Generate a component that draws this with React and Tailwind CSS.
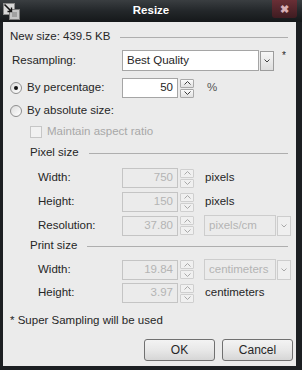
import React from 'react';

const font = { fontFamily: '"Liberation Sans", Arial, sans-serif' };

const Spin = ({ disabled }) => (
  <div className="flex flex-col w-[14px] h-[19px] ml-[2px] gap-px">
    {['up', 'down'].map((d) => (
      <div
        key={d}
        className={`flex-1 flex items-center justify-center border rounded-[1px] ${
          disabled ? 'border-[#cfcfcf] bg-[#f0f0f0]' : 'border-[#a9a9a9] bg-gradient-to-b from-[#fbfbfb] to-[#e1e1e1]'
        }`}
      >
        <svg width="7" height="4" viewBox="0 0 7 4">
          <path
            d={d === 'up' ? 'M0.5 3.5L3.5 0.5L6.5 3.5' : 'M0.5 0.5L3.5 3.5L6.5 0.5'}
            stroke={disabled ? '#a8a8a8' : '#3c3c3c'}
            fill="none"
          />
        </svg>
      </div>
    ))}
  </div>
);

const NumField = ({ value, disabled }) => (
  <div className="flex items-center">
    <div
      className={`w-[56px] h-[20px] border flex items-center justify-end pr-[4px] text-[11.5px] ${
        disabled ? 'border-[#c4c4c4] bg-[#ebebeb] text-[#b4b4b4]' : 'border-[#a5a5a5] bg-white text-[#1e1e1e]'
      }`}
    >
      {value}
    </div>
    <Spin disabled={disabled} />
  </div>
);

const DropArrow = ({ disabled }) => (
  <div
    className={`w-[14px] h-[20px] border flex items-center justify-center ${
      disabled ? 'border-[#cdcdcd] bg-[#efefef]' : 'border-[#9c9c9c] bg-gradient-to-b from-[#f7f7f7] to-[#dedede]'
    }`}
  >
    <svg width="6" height="4" viewBox="0 0 6 4">
      <path d="M0.5 0.5L3 3L5.5 0.5" stroke={disabled ? '#a8a8a8' : '#404040'} fill="none" />
    </svg>
  </div>
);

const Combo = ({ text, width, disabled }) => (
  <div className="flex items-center gap-px">
    <div
      className={`h-[21px] border flex items-center pl-[4px] ${
        disabled ? 'border-[#cdcdcd] bg-[#ebebeb] text-[#b4b4b4]' : 'border-[#a5a5a5] bg-white text-[#1e1e1e]'
      }`}
      style={{ width }}
    >
      {text}
    </div>
    <DropArrow disabled={disabled} />
  </div>
);

const Radio = ({ checked }) => (
  <div className="w-[12px] h-[12px] rounded-full border border-[#8e8e8e] bg-gradient-to-br from-[#dcdcdc] to-[#ffffff] flex items-center justify-center">
    {checked && <div className="w-[4px] h-[4px] rounded-full bg-[#111]" />}
  </div>
);

const Section = ({ title, mt }) => (
  <div className={`flex items-center h-[20px] pl-[27px] pr-[8px] ${mt}`}>
    <span>{title}</span>
    <div className="flex-1 ml-[10px] h-px bg-[#aeaeae]" />
  </div>
);

const App = () => {
  return (
    <div className="w-[302px] h-[370px] bg-[#1c1f22] flex flex-col text-[11.5px] text-[#262626]" style={font}>
      {/* title bar */}
      <div className="relative h-[22px] bg-gradient-to-b from-[#3a3e41] via-[#23272a] to-[#15181a] flex items-center justify-center">
        <svg className="absolute left-[3px] top-[3px]" width="17" height="17" viewBox="0 0 17 17">
          <rect x="0.5" y="0.5" width="11" height="11" fill="#d8d8d8" stroke="#8a8a8a" />
          <rect x="6.5" y="6.5" width="10" height="10" fill="#c4c4c4" stroke="#7a7a7a" />
          <rect x="9" y="9" width="5" height="5" fill="#a0a0a0" />
          <path d="M1.5 1.5L8 8" stroke="#111" strokeWidth="1.6" />
          <path d="M8.5 4.5V8.5H4.5" stroke="#111" strokeWidth="1.4" fill="none" />
        </svg>
        <span className="text-white font-bold text-[11.5px]">Resize</span>
        <div className="absolute right-[5px] top-0 w-[25px] h-[18px] rounded-b-[3px] bg-gradient-to-b from-[#6a2f36] to-[#3f1c21] flex items-center justify-center">
          <span className="text-[#d8b0b6] text-[11px] font-bold leading-none">✖</span>
        </div>
      </div>

      {/* client */}
      <div className="ml-[3px] mr-[6px] h-[344px] bg-[#ebebeb] flex flex-col">
        <div className="flex items-center h-[20px] mt-[5px] pl-[7px] pr-[8px]">
          <span>New size: 439.5 KB</span>
          <div className="flex-1 ml-[10px] h-px bg-[#aeaeae]" />
        </div>

        <div className="flex items-center h-[21px] mt-[3px]">
          <div className="w-[119px] pl-[9px]">Resampling:</div>
          <Combo text="Best Quality" width="137px" />
          <span className="ml-[8px] -mt-[10px] text-[10px]">*</span>
        </div>

        <div className="flex items-center h-[20px] mt-[7px]">
          <div className="w-[119px] pl-[7px] flex items-center gap-[5px]">
            <Radio checked />
            <span>By percentage:</span>
          </div>
          <NumField value="50" />
          <span className="ml-[13px] text-[#555]">%</span>
        </div>

        <div className="flex items-center h-[20px] mt-[3px]">
          <div className="pl-[7px] flex items-center gap-[5px]">
            <Radio />
            <span>By absolute size:</span>
          </div>
        </div>

        <div className="flex items-center h-[20px] mt-[1px] pl-[27px] gap-[5px] text-[#a8a8a8]">
          <div className="w-[12px] h-[12px] border border-[#c6c6c6] bg-[#f1f1f1]" />
          <span>Maintain aspect ratio</span>
        </div>

        <Section title="Pixel size" mt="mt-[1px]" />

        <div className="flex items-center h-[20px] mt-[5px]">
          <div className="w-[119px] pl-[35px]">Width:</div>
          <NumField value="750" disabled />
          <span className="ml-[11px]">pixels</span>
        </div>

        <div className="flex items-center h-[20px] mt-[4px]">
          <div className="w-[119px] pl-[35px]">Height:</div>
          <NumField value="150" disabled />
          <span className="ml-[11px]">pixels</span>
        </div>

        <div className="flex items-center h-[21px] mt-[3px]">
          <div className="w-[119px] pl-[35px]">Resolution:</div>
          <NumField value="37.80" disabled />
          <div className="ml-[10px]">
            <Combo text="pixels/cm" width="72px" disabled />
          </div>
        </div>

        <Section title="Print size" mt="mt-0" />

        <div className="flex items-center h-[21px] mt-[3px]">
          <div className="w-[119px] pl-[35px]">Width:</div>
          <NumField value="19.84" disabled />
          <div className="ml-[10px]">
            <Combo text="centimeters" width="72px" disabled />
          </div>
        </div>

        <div className="flex items-center h-[20px] mt-[3px]">
          <div className="w-[119px] pl-[35px]">Height:</div>
          <NumField value="3.97" disabled />
          <span className="ml-[11px]">centimeters</span>
        </div>

        <div className="flex items-center h-[20px] mt-[8px] pl-[7px]">* Super Sampling will be used</div>

        <div className="flex justify-end gap-[7px] mt-[8px] pr-[3px]">
          {['OK', 'Cancel'].map((b) => (
            <div
              key={b}
              className="w-[71px] h-[22px] rounded-[3px] border border-[#707070] bg-gradient-to-b from-[#f3f3f3] via-[#e8e8e8] to-[#d6d6d6] flex items-center justify-center text-[12px]"
            >
              {b}
            </div>
          ))}
        </div>
      </div>
    </div>
  );
};

export default App;
